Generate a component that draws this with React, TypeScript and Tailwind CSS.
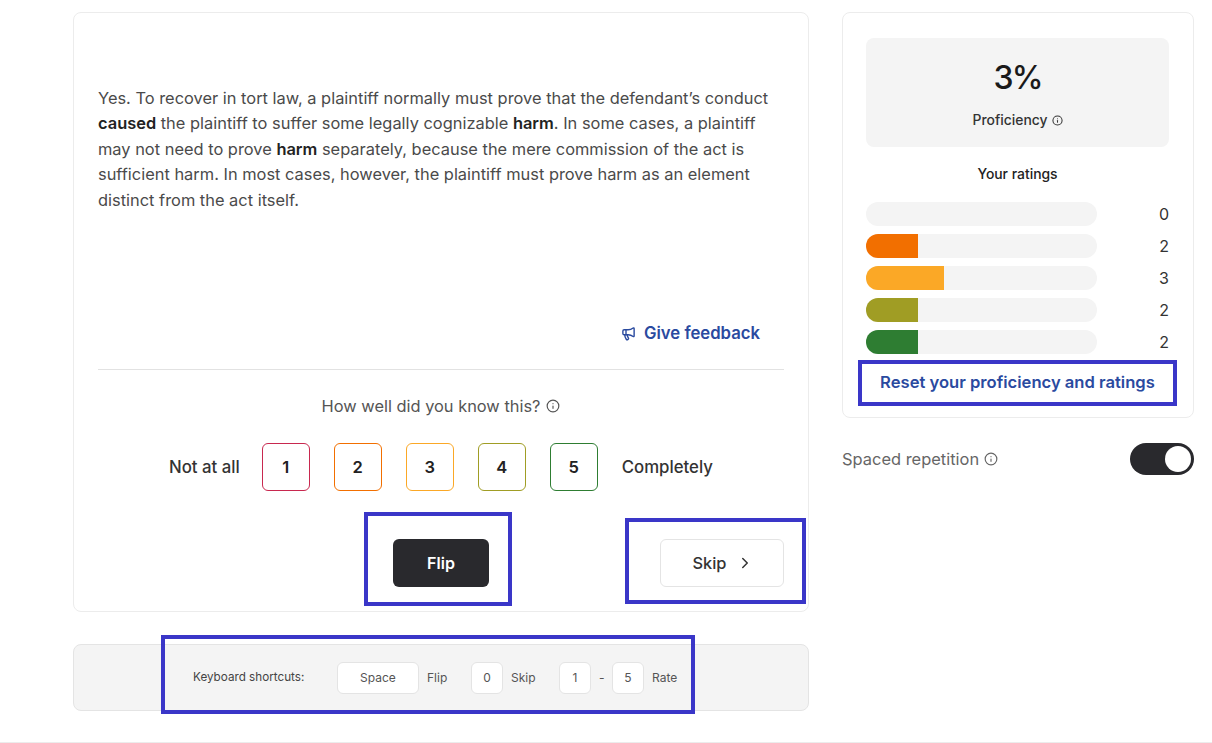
import { ChevronRight, Info, Megaphone } from 'lucide-react'

const RATINGS = [
  { n: 1, border: 'border-[#c8284f]' },
  { n: 2, border: 'border-[#f26f00]' },
  { n: 3, border: 'border-[#fba826]' },
  { n: 4, border: 'border-[#a09d24]' },
  { n: 5, border: 'border-[#2e7d32]' },
]

const BARS = [
  { count: 0, fill: 'bg-transparent' },
  { count: 2, fill: 'bg-[#f26f00]' },
  { count: 3, fill: 'bg-[#fba826]' },
  { count: 2, fill: 'bg-[#a09d24]' },
  { count: 2, fill: 'bg-[#2e7d32]' },
]

// Annotation box drawn over the screenshot's highlighted controls
const HIGHLIGHT = 'pointer-events-none absolute border-4 border-[#3a36c8]'

function Key({ label, wide }: { label: string; wide?: boolean }) {
  return (
    <span
      className={`flex h-8 items-center justify-center rounded-md border border-[#e4e4e4] bg-white text-xs text-[#555] ${
        wide ? 'w-[82px]' : 'w-8'
      }`}
    >
      {label}
    </span>
  )
}

export default function App() {
  return (
    <div className="h-[743px] overflow-hidden bg-white font-['Inter',sans-serif] text-[#222]">
      <div className="flex h-[742px] gap-[33px] pl-[73px] pt-3">
        {/* Flashcard column */}
        <div className="w-[736px] shrink-0">
          <div className="h-[600px] rounded-lg border border-[#ececec] px-6 pt-[72px]">
            <p className="h-[236px] pt-[0.5px] text-[16.42px] leading-[25.6px] text-[#4a4a4a]">
              Yes. To recover in tort law, a plaintiff normally must prove that the defendant’s conduct{' '}
              <b className="font-semibold text-[#222]">caused</b> the plaintiff to suffer some legally cognizable{' '}
              <b className="font-semibold text-[#222]">harm</b>. In some cases, a plaintiff may not need to prove{' '}
              <b className="font-semibold text-[#222]">harm</b> separately, because the mere commission of the act is
              sufficient harm. In most cases, however, the plaintiff must prove harm as an element distinct from the
              act itself.
            </p>

            <div className="flex items-center justify-end gap-2 pr-6 text-[16.7px] font-semibold leading-6 text-[#2a4a9f]">
              <Megaphone size={15} strokeWidth={2.25} />
              <span>Give feedback</span>
            </div>

            <div className="mt-6 border-t border-[#e2e2e2]" />

            <div className="mt-6 flex items-center justify-center gap-1.5 text-[16.4px] leading-6 text-[#555]">
              How well did you know this?
              <Info size={14} strokeWidth={2} />
            </div>

            <div className="mt-[25px] flex items-center justify-center gap-6 text-[16.5px] font-medium">
              <span className="-mr-[2px] pt-[2px] text-[16.8px] text-[#333]">Not at all</span>
              {RATINGS.map((r) => (
                <span
                  key={r.n}
                  className={`flex h-12 w-12 items-center justify-center rounded-md border font-semibold ${r.border}`}
                >
                  {r.n}
                </span>
              ))}
              <span className="pt-[2px] text-[16.8px] text-[#333]">Completely</span>
            </div>

            <div className="mt-12 grid grid-cols-[1fr_96px_1fr] items-center">
              <div />
              <div className="relative">
                <button className="h-12 w-24 rounded-md bg-[#29292d] text-base font-semibold text-white">Flip</button>
                <div className={`${HIGHLIGHT} -left-[29px] -right-[23px] -top-[27px] -bottom-[19px]`} />
              </div>
              <div className="relative flex justify-end">
                <button className="flex h-12 w-[124px] items-center justify-center gap-[9px] rounded-md border border-[#e4e4e4] pl-[2px] text-[16.4px] font-medium text-[#333]">
                  Skip
                  <ChevronRight size={18} />
                </button>
                <div className={`${HIGHLIGHT} -right-[22px] -top-[21px] -bottom-[17px] left-[136px]`} />
              </div>
            </div>
          </div>

          {/* Shortcuts bar */}
          <div className="relative mt-8 flex h-[67px] items-center rounded-lg border border-[#e4e4e4] bg-[#f4f4f4] pl-[119px] text-xs text-[#555]">
            <span className="w-[144px] text-[11.7px] text-[#444]">Keyboard shortcuts:</span>
            <Key label="Space" wide />
            <span className="ml-2 w-11">Flip</span>
            <Key label="0" />
            <span className="ml-2 w-12">Skip</span>
            <Key label="1" />
            <span className="mx-2 w-[5px]">-</span>
            <Key label="5" />
            <span className="ml-2">Rate</span>
            <div className={`${HIGHLIGHT} -top-[10px] -bottom-[4px] left-[87px] w-[534px]`} />
          </div>
        </div>

        {/* Sidebar */}
        <div className="w-[352px] shrink-0">
          <div className="h-[406px] rounded-lg border border-[#ececec] pl-[23px] pr-6 pt-[25px]">
            <div className="flex h-[109px] flex-col items-center rounded-lg bg-[#f4f4f4] pt-5">
              <div className="text-[32px] font-medium leading-10 tracking-[-2px] text-[#1a1a1a]">3%</div>
              <div className="mt-3 flex items-center gap-1 text-[13.9px] font-medium leading-5 text-[#333]">
                Proficiency
                <Info size={11} strokeWidth={2.25} />
              </div>
            </div>

            <div className="mt-[17px] text-center text-[13.9px] font-medium leading-5 text-[#222]">Your ratings</div>

            <div className="mt-[18px] flex flex-col gap-2">
              {BARS.map((b, i) => (
                <div key={i} className="flex h-6 items-center justify-between">
                  <div className="h-6 w-[231px] overflow-hidden rounded-full bg-[#f4f4f4]">
                    <div className={`h-full ${b.fill}`} style={{ width: `${(b.count / 8.9) * 100}%` }} />
                  </div>
                  <span className="text-base text-[#333]">{b.count}</span>
                </div>
              ))}
            </div>

            <div className="relative mt-[16px] text-center text-[16.6px] font-semibold leading-6 text-[#2a4a9f]">
              Reset your proficiency and ratings
              <div className={`${HIGHLIGHT} -left-2 -right-2 -top-[10px] -bottom-3`} />
            </div>
          </div>

          <div className="mt-[25px] flex items-center justify-between">
            <div className="flex items-center gap-[5px] pt-px text-[16.45px] text-[#666]">
              Spaced repetition
              <Info size={14} strokeWidth={2} />
            </div>
            <div className="flex h-8 w-16 items-center justify-end rounded-full bg-[#29292d] pr-[3px]">
              <div className="h-[26px] w-[26px] rounded-full bg-white" />
            </div>
          </div>
        </div>
      </div>
      <div className="border-t border-[#ececec]" />
    </div>
  )
}
